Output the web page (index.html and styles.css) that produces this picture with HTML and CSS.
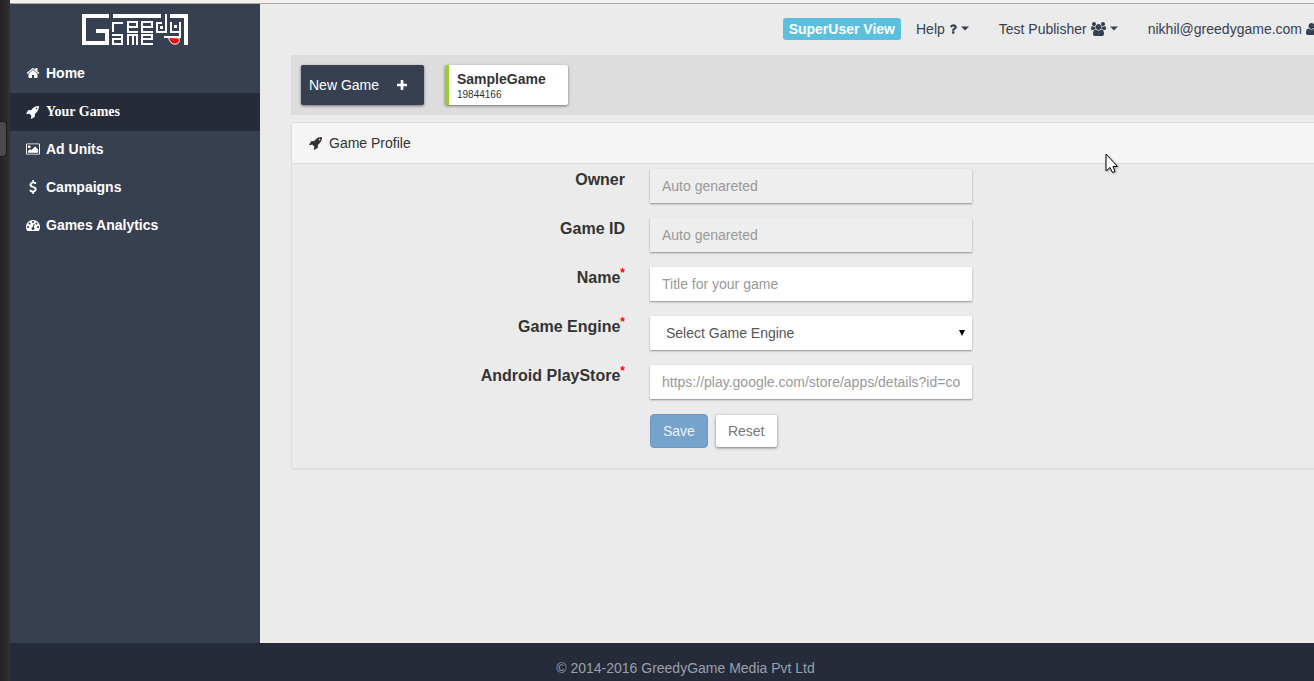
FILE: index.html
```html
<!DOCTYPE html>
<html lang="en">
<head>
<meta charset="utf-8">
<title>GreedyGame - Game Profile</title>
<link rel="stylesheet" href="styles.css">
</head>
<body>
<svg class="sprite" aria-hidden="true">
  <symbol id="i-rocket" viewBox="0 0 1792 1792"><path d="M1440 448q0-40-28-68t-68-28-68 28-28 68 28 68 68 28 68-28 28-68zm224-288q0 249-75.5 430.5t-253.5 360.5q-81 80-195 176l-20 379q-2 16-16 26l-384 224q-7 4-16 4-12 0-23-9l-64-64q-13-14-8-32l85-276-281-281-276 85q-3 1-9 1-14 0-23-9l-64-64q-17-19-5-39l224-384q10-14 26-16l379-20q96-114 176-195 188-187 358-258t431-71q14 0 24 9.5t10 22.5z"/></symbol>
  <symbol id="i-caret" viewBox="0 0 8 4"><path d="M0 0h8L4 4z"/></symbol>
</svg>
<div class="shell">
  <div class="launcher"><span class="launcher-tab"></span></div>
  <div class="app">
    <div class="window-edge"></div>
    <div class="workspace">
      <aside class="sidebar">
        <a class="brand" href="#" aria-label="Greedy Game">
          <svg class="logo" viewBox="0 0 106 31" aria-hidden="true">
            <g class="logo-thick">
              <path d="M27 2H2V29H25V17H14"/>
              <path d="M31 2H79"/>
              <path d="M88 2H104V31"/>
            </g>
            <g class="logo-thin">
              <path d="M31 18V9H41"/>
              <path d="M56 18H46V8H55V13H47"/>
              <path d="M71 18H60V8H70V13H61"/>
              <path d="M84 0V18H75V9H80"/>
              <path d="M89 8V18H98M98 8V23H82"/>
              <path d="M30 21H40V30H31V25H40"/>
              <path d="M46 31V21H55V31M51 21V31"/>
              <path d="M71 30H60V21H70V25H61"/>
            </g>
            <rect class="logo-eye" x="78" y="12" width="3" height="3"/>
            <rect class="logo-eye" x="92" y="11" width="3" height="3"/>
            <path class="logo-tongue" d="M86.500 23.500L97 24Q98.500 30 93 30.200Q88 30 86.500 23.500z"/>
          </svg>
        </a>
        <nav class="menu">
          <a class="menu-item" href="#"><svg class="icon" viewBox="0 0 1792 1792"><path d="M1472 992v480q0 26-19 45t-45 19h-384v-384h-256v384h-384q-26 0-45-19t-19-45v-480q0-1 .5-3t.5-3l575-474 575 474q1 2 1 6zm223-69l-62 74q-8 9-21 11h-3q-13 0-21-7l-692-577-692 577q-12 8-24 7-13-2-21-11l-62-74q-8-10-7-23.5t11-21.5l719-599q32-26 76-26t76 26l244 204v-195q0-14 9-23t23-9h192q14 0 23 9t9 23v408l219 182q10 8 11 21.5t-7 23.5z"/></svg>Home</a>
          <a class="menu-item active" href="#"><svg class="icon"><use href="#i-rocket"/></svg>Your Games</a>
          <a class="menu-item" href="#"><svg class="icon" viewBox="-64 0 1920 1792"><path d="M576 576q0 80-56 136t-136 56-136-56-56-136 56-136 136-56 136 56 56 136zm1024 384v448h-1408v-192l320-320 160 160 512-512zm96-704h-1600q-13 0-22.5 9.5t-9.5 22.5v1216q0 13 9.5 22.5t22.5 9.5h1600q13 0 22.5-9.5t9.5-22.5v-1216q0-13-9.5-22.5t-22.5-9.5zm160 32v1216q0 66-47 113t-113 47h-1600q-66 0-113-47t-47-113v-1216q0-66 47-113t113-47h1600q66 0 113 47t47 113z"/></svg>Ad Units</a>
          <a class="menu-item" href="#"><svg class="icon" viewBox="0 0 1792 1792"><path d="M1362 1185q0 153-99.5 263.5t-258.5 136.5v175q0 14-9 23t-23 9h-135q-13 0-22.5-9.5t-9.5-22.5v-175q-66-9-127.5-31t-101.5-44.500-74-48-46.500-37.500-17.500-18q-17-21-2-41l103-135q7-10 23-12 15-2 24 9l2 2q113 99 243 125 37 8 74 8 81 0 142.500-43t61.500-122q0-28-15-53t-33.500-42-58.500-37.500-66-32-80-32.500q-39-16-61.500-25t-61.500-26.500-62.500-31-56.500-35.500-53.500-42.500-43.500-49-35.500-58-21-66.500-8.500-78q0-138 98-242t255-134v-180q0-13 9.500-22.500t22.500-9.500h135q14 0 23 9t9 23v176q57 6 110.500 23t87 33.500 63.500 37.500 39 29 15 14q17 18 5 38l-81 146q-8 15-23 16-14 3-27-7-3-3-14.500-12t-39-26.500-58.500-32-74.500-26-85.500-11.500q-95 0-155 43t-60 111q0 26 8.500 48t29.500 41.500 39.500 33 56 31 60.500 27 70 27.500q53 20 81 31.500t76 35 75.500 42.500 62 50 53 63.500 31.500 76.500 13 94z"/></svg>Campaigns</a>
          <a class="menu-item" href="#"><svg class="icon" viewBox="0 0 1792 1792"><path d="M384 1152q0-53-37.5-90.5t-90.5-37.5-90.5 37.5-37.5 90.5 37.5 90.5 90.5 37.5 90.5-37.5 37.5-90.5zm192-448q0-53-37.5-90.5t-90.5-37.5-90.5 37.5-37.5 90.5 37.5 90.5 90.5 37.5 90.5-37.5 37.5-90.5zm428 481l101-382q6-26-7.5-48.5t-38.5-29.5-48 6.5-30 39.5l-101 382q-60 5-107 43.5t-63 98.5q-20 77 20 146t117 89 146-20 89-117q16-60-6-117t-72-91zm660-33q0-53-37.5-90.5t-90.5-37.5-90.5 37.5-37.5 90.5 37.5 90.5 90.5 37.5 90.5-37.5 37.5-90.5zm-640-640q0-53-37.5-90.5t-90.5-37.5-90.5 37.5-37.5 90.5 37.5 90.5 90.5 37.5 90.5-37.5 37.5-90.5zm448 192q0-53-37.5-90.5t-90.5-37.5-90.5 37.5-37.5 90.5 37.5 90.5 90.5 37.5 90.5-37.5 37.5-90.5zm320 448q0 261-141 483-19 29-54 29h-1402q-35 0-54-29-141-221-141-483 0-182 71-348t191-286 286-191 348-71 348 71 286 191 191 286 71 348z"/></svg>Games Analytics</a>
        </nav>
      </aside>
      <main class="content">
        <header class="topbar">
          <a class="badge" href="#">SuperUser View</a>
          <a class="top-link" href="#">Help <svg class="icon-question" viewBox="350 128 1088 1408"><path d="M1088 1256v240q0 16-12 28t-28 12h-240q-16 0-28-12t-12-28v-240q0-16 12-28t28-12h240q16 0 28 12t12 28zm316-600q0 54-15.5 101t-35 76.5-55 59.5-57.5 43.500-61 35.500q-41 23-68.500 65t-27.500 67q0 17-12 32.500t-28 15.500h-240q-15 0-25.500-18.500t-10.500-37.500v-45q0-83 65-156.500t143-108.500q59-27 84-56t25-76q0-42-46.500-74t-107.500-32q-65 0-108 29-35 25-107 115-13 16-31 16-12 0-25-8l-164-125q-13-10-15.500-25t5.500-28q160-266 464-266 80 0 161 31t146 83 106 127.500 41 158.500z"/></svg><svg class="caret"><use href="#i-caret"/></svg></a>
          <a class="top-link" href="#">Test Publisher <svg class="icon-users" viewBox="0 0 1920 1792"><path d="M593 896q-162 5-265 128h-134q-82 0-138-40.5t-56-118.5q0-353 124-353 6 0 43.5 21t97.5 42.500 119 21.500q67 0 133-23-5 37-5 66 0 139 81 256zm1071 637q0 120-73 189.500t-194 69.500h-874q-121 0-194-69.500t-73-189.500q0-53 3.500-103.500t14-109 26.500-108.500 43-97.500 62-81 85.500-53.500 111.500-20q10 0 43 21.500t73 48 107 48 135 21.500 135-21.500 107-48 73-48 43-21.500q61 0 111.500 20t85.500 53.500 62 81 43 97.500 26.500 108.500 14 109 3.500 103.500zm-1024-1277q0 106-75 181t-181 75-181-75-75-181 75-181 181-75 181 75 75 181zm704 384q0 159-112.500 271.500t-271.500 112.500-271.500-112.500-112.500-271.500 112.500-271.500 271.500-112.500 271.500 112.500 112.500 271.500zm576 225q0 78-56 118.500t-138 40.500h-134q-103-123-265-128 81-117 81-256 0-29-5-66 66 23 133 23 59 0 119-21.500t97.500-42.500 43.500-21q124 0 124 353zm-128-609q0 106-75 181t-181 75-181-75-75-181 75-181 181-75 181 75 75 181z"/></svg><svg class="caret"><use href="#i-caret"/></svg></a>
          <a class="top-link" href="#">nikhil@greedygame.com <svg class="icon-user" viewBox="192 128 1408 1536"><path d="M1600 1405q0 120-73 189.500t-194 69.500h-874q-121 0-194-69.500t-73-189.500q0-53 3.500-103.500t14-109 26.500-108.500 43-97.500 62-81 85.500-53.500 111.500-20q9 0 42 21.500t74.500 48 108 48 133.500 21.500 133.500-21.500 108-48 74.500-48 42-21.500q61 0 111.500 20t85.500 53.500 62 81 43 97.500 26.500 108.500 14 109 3.500 103.500zm-320-893q0 159-112.500 271.500t-271.500 112.500-271.500-112.500-112.500-271.500 112.500-271.500 271.500-112.500 271.500 112.500 112.500 271.500z"/></svg><svg class="caret"><use href="#i-caret"/></svg></a>
        </header>
        <section class="games">
          <button class="game-card new-game" type="button">New Game <svg class="icon-plus" viewBox="192 128 1408 1408"><path d="M1600 736v192q0 40-28 68t-68 28h-416v416q0 40-28 68t-68 28h-192q-40 0-68-28t-28-68v-416h-416q-40 0-68-28t-28-68v-192q0-40 28-68t68-28h416v-416q0-40 28-68t68-28h192q40 0 68 28t28 68v416h416q40 0 68 28t28 68z"/></svg></button>
          <a class="game-card game" href="#"><strong class="game-name">SampleGame</strong><span class="game-id">19844166</span></a>
        </section>
        <section class="panel">
          <h1 class="panel-title"><svg class="icon"><use href="#i-rocket"/></svg>Game Profile</h1>
          <form class="profile">
            <label for="owner">Owner</label>
            <input class="field" id="owner" type="text" placeholder="Auto genareted" disabled>
            <label for="game-id">Game ID</label>
            <input class="field" id="game-id" type="text" placeholder="Auto genareted" disabled>
            <label for="name">Name<sup>*</sup></label>
            <input class="field" id="name" type="text" placeholder="Title for your game">
            <label for="engine">Game Engine<sup>*</sup></label>
            <div class="select-box">
              <select class="field" id="engine"><option>Select Game Engine</option></select>
              <svg class="select-arrow" viewBox="0 0 6 6"><path d="M0 0h6L3 6z"/></svg>
            </div>
            <label for="store">Android PlayStore<sup>*</sup></label>
            <input class="field" id="store" type="text" placeholder="https://play.google.com/store/apps/details?id=com.example.game">
            <div class="actions">
              <button class="btn save" type="submit" disabled>Save</button>
              <button class="btn reset" type="reset">Reset</button>
            </div>
          </form>
        </section>
      </main>
    </div>
    <footer class="footer">© 2014-2016 GreedyGame Media Pvt Ltd</footer>
  </div>
</div>
<svg class="pointer" viewBox="0 0 13 21" aria-hidden="true"><path d="M1 1V18L5 14.500L7.500 19.500L10 18.500L8 13.500H12.500Z"/></svg>
</body>
</html>
```
FILE: styles.css
```css
* { box-sizing: border-box; }

body {
  margin: 0;
  overflow: hidden;
  background: #ebebeb;
  color: #333;
  font: 14px/20px "Liberation Sans", Arial, sans-serif;
}

a { color: inherit; text-decoration: none; }
svg { fill: currentColor; }
.sprite { position: absolute; width: 0; height: 0; }

/* The app is wider than the window; its right edge is cut off. */
.shell { display: flex; width: calc(100% + 47px); min-height: 100vh; }

.launcher {
  width: 10px;
  flex: none;
  padding-top: 121px;
  background: linear-gradient(to right, #232323, #333);
}
.launcher-tab {
  display: block;
  width: 7px;
  height: 36px;
  border: 1px solid #191919;
  border-left: 0;
  border-radius: 0 4px 4px 0;
  background: #4a4a4a;
}

.app { flex: 1; min-width: 0; display: flex; flex-direction: column; }
.window-edge { height: 4px; background: #f2f1f0; border-bottom: 1px solid #a8a5a2; }
.workspace { flex: 1; display: flex; }

.sidebar { width: 250px; flex: none; background: #364051; color: #fff; }
.brand { display: flex; justify-content: center; height: 51px; padding-top: 10px; }
.logo { width: 106px; height: 31px; }
.logo-thick, .logo-thin { fill: none; stroke: #fff; }
.logo-thick { stroke-width: 4px; }
.logo-thin { stroke-width: 2px; }
.logo-eye { fill: #fff; }
.logo-tongue { fill: #f00; stroke: #fff; stroke-width: 1px; }

.icon { width: 14px; height: 14px; flex: none; }
.menu-item {
  display: flex;
  align-items: center;
  gap: 6px;
  height: 38px;
  padding: 0 0 2px 16px;
  font-weight: bold;
}
.menu-item.active { padding-bottom: 0; background: #252b38; font-family: "Liberation Serif", serif; }

.content { flex: 1; min-width: 0; padding-left: 31px; }

.topbar {
  display: flex;
  align-items: center;
  justify-content: flex-end;
  height: 51px;
  padding: 0 32px 2px 0;
  gap: 30px;
  color: #364051;
  white-space: nowrap;
}
.badge {
  margin-right: -15px;
  padding: 1px 6px;
  border-radius: 3px;
  background: #5bc0de;
  color: #fff;
  font-weight: bold;
}
.top-link { display: flex; align-items: center; gap: 4px; }
.icon-question { width: 8px; height: 11px; }
.icon-users { width: 15px; height: 14px; }
.icon-user { width: 11px; height: 12px; }
.caret { width: 8px; height: 5px; }

.games { display: flex; gap: 21px; padding: 10px; background: #ddd; }
.game-card {
  width: 123px;
  height: 40px;
  border: 0;
  border-radius: 2px;
  box-shadow: 0 1px 3px rgba(0, 0, 0, .5);
  font: inherit;
}
.new-game {
  display: flex;
  align-items: center;
  justify-content: space-between;
  padding: 0 17px 0 8px;
  background: #364051;
  color: #fff;
}
.icon-plus { width: 10px; height: 10px; }
.game {
  display: flex;
  flex-direction: column;
  padding: 5px 8px;
  border-left: 4px solid #9acd32;
  background: #fff;
}
.game-name { line-height: 18px; }
.game-id { font-size: 10px; line-height: 14px; }

.panel {
  margin-top: 7px;
  border: 1px solid #ddd;
  border-radius: 4px;
  box-shadow: 0 1px 1px rgba(0, 0, 0, .05);
}
.panel-title {
  display: flex;
  align-items: center;
  gap: 6px;
  height: 41px;
  margin: 0;
  padding-left: 17px;
  border-bottom: 1px solid #ddd;
  background: #f5f5f5;
  font-size: 14px;
  font-weight: normal;
}

.profile {
  display: grid;
  grid-template-columns: 333px 322px;
  gap: 15px 25px;
  padding: 5px 0 20px;
}
.profile label { padding-top: 1px; text-align: right; font-size: 16px; font-weight: bold; }
.profile sup { color: #f00; font-size: 12px; line-height: 0; }

.field {
  display: block;
  width: 100%;
  height: 34px;
  padding: 0 12px;
  border: 0;
  border-radius: 1px;
  background: #fff;
  box-shadow: 0 1px 2px rgba(0, 0, 0, .4);
  color: #555;
  font: inherit;
}
.field:disabled { background: #eee; }
.field::placeholder { color: #999; opacity: 1; }
.select-box { position: relative; }
.select-box .field { padding: 0 16px; appearance: none; }
.select-arrow { position: absolute; top: 14px; right: 7px; width: 6px; height: 6px; color: #000; pointer-events: none; }

.actions { grid-column: 2; display: flex; align-items: center; gap: 8px; }
.btn { padding: 0 12px; font: inherit; line-height: 32px; }
.save { border: 1px solid #6b98c4; border-radius: 4px; background: #75a3cc; color: #edf3f9; }
.reset { padding: 0 12px; border: 0; border-radius: 2px; background: #fff; color: #777; box-shadow: 0 1px 3px rgba(0, 0, 0, .5); }

.footer { height: 38px; padding-top: 15px; background: #252b38; color: #99a1ad; text-align: center; }

.pointer {
  position: absolute;
  left: 1105px;
  top: 153px;
  width: 13px;
  height: 21px;
  fill: #fff;
  stroke: #000;
  stroke-width: 1px;
  filter: drop-shadow(1px 1px 1px rgba(0, 0, 0, .3));
}
```
